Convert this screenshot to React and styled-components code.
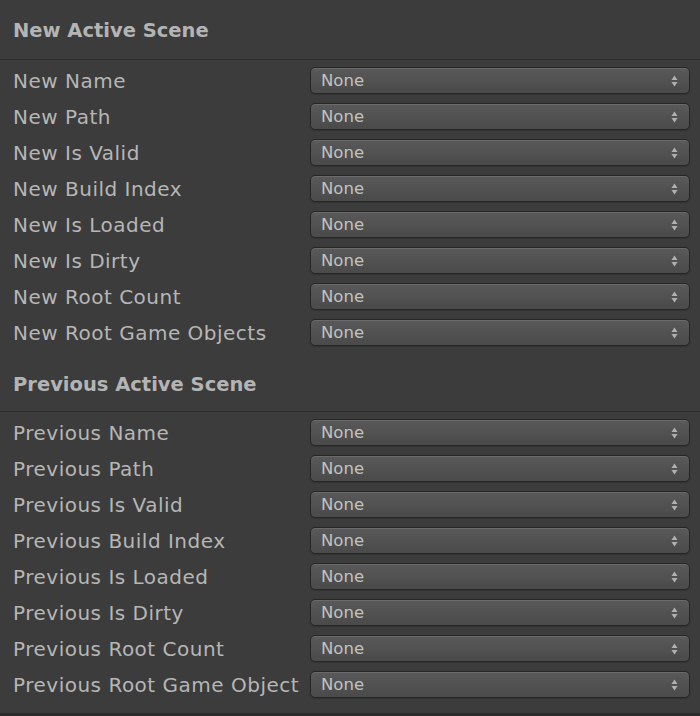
import React from 'react';
import styled, { createGlobalStyle } from 'styled-components';

const GlobalStyle = createGlobalStyle`
  html, body {
    margin: 0;
    padding: 0;
    background: #3c3c3c;
  }
  body {
    font-family: "DejaVu Sans", "Liberation Sans", sans-serif;
  }
`;

const Inspector = styled.div`
  width: 700px;
  height: 716px;
  background: #3c3c3c;
  display: flex;
  flex-direction: column;
  overflow: hidden;
`;

const Section = styled.section`
  display: flex;
  flex-direction: column;
`;

const Header = styled.h2`
  margin: 0;
  height: ${(p) => p.$height}px;
  box-sizing: border-box;
  padding: ${(p) => p.$top}px 0 0 13px;
  font-size: 19.5px;
  font-weight: bold;
  color: #b4b4b4;
  border-bottom: 1px solid #2d2d2d;
  line-height: 24px;
`;

const Rows = styled.div`
  display: flex;
  flex-direction: column;
`;

const Row = styled.div`
  height: 36px;
  display: grid;
  grid-template-columns: 287px 380px;
  column-gap: 10px;
  padding-left: 13px;
  box-sizing: border-box;
  align-items: start;
  padding-top: 7px;
`;

const Label = styled.div`
  font-size: 20px;
  letter-spacing: 0.5px;
  color: #b6b6b6;
  line-height: 28px;
  white-space: nowrap;
  overflow: hidden;
`;

const Dropdown = styled.div`
  height: 27px;
  box-sizing: border-box;
  border: 1px solid #262626;
  border-radius: 5px;
  background: linear-gradient(#595959, #4a4a4a);
  box-shadow: inset 0 1px 0 #6a6a6a, 0 1px 1px #333;
  display: flex;
  align-items: center;
  justify-content: space-between;
  padding: 0 11px 0 10px;
  font-size: 16.5px;
  color: #c2c2c2;
`;

const Footer = styled.div`
  margin-top: auto;
  height: 3px;
  background: #2c2c2c;
`;

const Arrows = () => (
  <svg width="7" height="12" viewBox="0 0 7 12">
    <path d="M3.5 0.5 L6.5 5 L0.5 5 Z" fill="#b0b0b0" />
    <path d="M0.5 7 L6.5 7 L3.5 11.5 Z" fill="#b0b0b0" />
  </svg>
);

const fields = ['Name', 'Path', 'Is Valid', 'Build Index', 'Is Loaded', 'Is Dirty', 'Root Count', 'Root Game Objects'];

const SceneSection = ({ title, prefix, height, top }) => (
  <Section>
    <Header $height={height} $top={top}>{title}</Header>
    <Rows>
      {fields.map((f) => (
        <Row key={f}>
          <Label>{`${prefix} ${f}`}</Label>
          <Dropdown>
            <span>None</span>
            <Arrows />
          </Dropdown>
        </Row>
      ))}
    </Rows>
  </Section>
);

export default function App() {
  return (
    <Inspector>
      <GlobalStyle />
      <SceneSection title="New Active Scene" prefix="New" height={60} top={19} />
      <SceneSection title="Previous Active Scene" prefix="Previous" height={64} top={25} />
      <Footer />
    </Inspector>
  );
}
